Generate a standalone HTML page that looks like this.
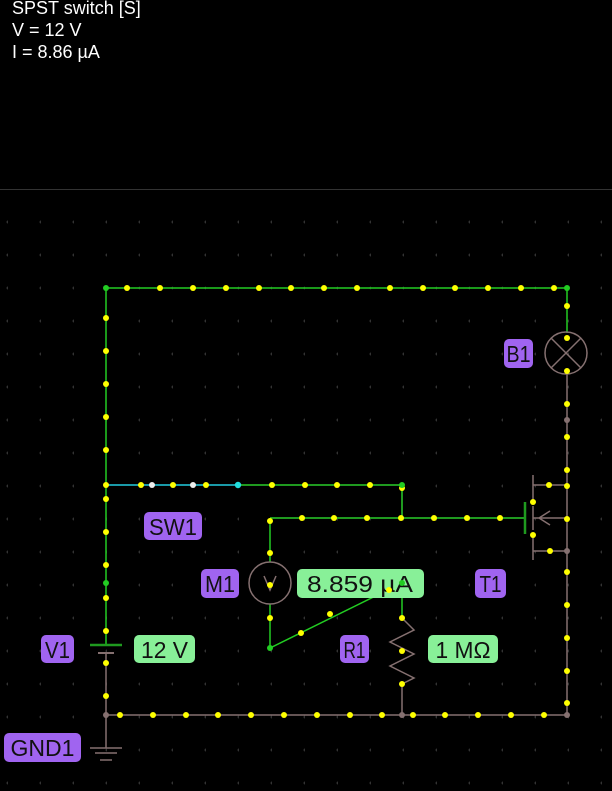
<!DOCTYPE html>
<html><head><style>
html,body{margin:0;padding:0;background:#000;width:612px;height:791px;overflow:hidden}
.hdr{position:absolute;left:12px;top:-3px;color:#fff;font:18px/22px "Liberation Sans",sans-serif}
svg{position:absolute;left:0;top:0}
</style></head><body>
<div class="hdr">SPST switch [S]<br>V = 12 V<br>I = 8.86 µA</div>
<svg width="612" height="791" xmlns="http://www.w3.org/2000/svg">
<defs>
<pattern id="g" x="-25" y="222" width="33" height="33" patternUnits="userSpaceOnUse"><circle cx="33" cy="0" r="1.5" fill="#333"/><circle cx="33" cy="33" r="1.5" fill="#333"/></pattern>
</defs>
<line x1="0" y1="189.5" x2="612" y2="189.5" stroke="#333" stroke-width="1"/>
<rect x="0" y="200" width="612" height="591" fill="url(#g)"/>
<g fill="none" stroke-width="1.5">
<path d="M106 288H567V333" stroke="#22cc22"/>
<path d="M106 288V485" stroke="#22cc22"/>
<path d="M106 485V645" stroke="#22cc22"/>
<path d="M106 653V748" stroke="#857070"/>
<path d="M106 715H567V373" stroke="#857070"/>
<path d="M106 485H238" stroke="#1a9aa8" stroke-width="2"/>
<path d="M238 485H402V518" stroke="#1f9a1f" stroke-width="2"/>
<path d="M270 518H525" stroke="#1f9a1f" stroke-width="2"/>
<path d="M525 502V534" stroke="#1f9a1f" stroke-width="2.5"/>
<path d="M270 518V562M270 604V648L402 583V618" stroke="#22cc22"/>
<path d="M533 475V500M533 506V530M533 536V560M533 485H567M533 551H567M533 518H567M539 518L550 511M539 518L550 525" stroke="#857070"/>
<path d="M402 618L414 630L390 642L414 654L390 666L414 678L402 684V715" stroke="#857070"/>
<circle cx="566" cy="353" r="21" stroke="#857070"/>
<path d="M551 338L581 368M581 338L551 368" stroke="#857070"/>
<circle cx="270" cy="583" r="21" stroke="#857070"/>
<path d="M264 576L270 590L276 576" stroke="#857070"/>
<path d="M90 645H122" stroke="#1f9a1f" stroke-width="2.5"/>
<path d="M98 653H114" stroke="#857070" stroke-width="2"/>
<path d="M90 748H122M95 753H117M100 760H112" stroke="#857070"/>
</g>
<g fill="#ffff00">
<circle cx="127" cy="288" r="3"/><circle cx="160" cy="288" r="3"/><circle cx="193" cy="288" r="3"/><circle cx="226" cy="288" r="3"/><circle cx="259" cy="288" r="3"/><circle cx="291" cy="288" r="3"/><circle cx="324" cy="288" r="3"/><circle cx="357" cy="288" r="3"/><circle cx="390" cy="288" r="3"/><circle cx="423" cy="288" r="3"/><circle cx="455" cy="288" r="3"/><circle cx="488" cy="288" r="3"/><circle cx="521" cy="288" r="3"/><circle cx="554" cy="288" r="3"/>
<circle cx="106" cy="318" r="3"/><circle cx="106" cy="351" r="3"/><circle cx="106" cy="384" r="3"/><circle cx="106" cy="417" r="3"/><circle cx="106" cy="450" r="3"/><circle cx="106" cy="485" r="3"/><circle cx="106" cy="499" r="3"/><circle cx="106" cy="532" r="3"/><circle cx="106" cy="565" r="3"/><circle cx="106" cy="598" r="3"/><circle cx="106" cy="631" r="3"/><circle cx="106" cy="663" r="3"/><circle cx="106" cy="696" r="3"/>
<circle cx="120" cy="715" r="3"/><circle cx="153" cy="715" r="3"/><circle cx="186" cy="715" r="3"/><circle cx="218" cy="715" r="3"/><circle cx="251" cy="715" r="3"/><circle cx="284" cy="715" r="3"/><circle cx="317" cy="715" r="3"/><circle cx="350" cy="715" r="3"/><circle cx="382" cy="715" r="3"/><circle cx="413" cy="715" r="3"/><circle cx="445" cy="715" r="3"/><circle cx="478" cy="715" r="3"/><circle cx="511" cy="715" r="3"/><circle cx="544" cy="715" r="3"/>
<circle cx="567" cy="306" r="3"/><circle cx="567" cy="338" r="3"/><circle cx="567" cy="371" r="3"/><circle cx="567" cy="404" r="3"/><circle cx="567" cy="437" r="3"/><circle cx="567" cy="470" r="3"/><circle cx="567" cy="486" r="3"/><circle cx="567" cy="519" r="3"/><circle cx="567" cy="572" r="3"/><circle cx="567" cy="605" r="3"/><circle cx="567" cy="638" r="3"/><circle cx="567" cy="671" r="3"/><circle cx="567" cy="703" r="3"/>
<circle cx="141" cy="485" r="3"/><circle cx="173" cy="485" r="3"/><circle cx="206" cy="485" r="3"/><circle cx="272" cy="485" r="3"/><circle cx="305" cy="485" r="3"/><circle cx="337" cy="485" r="3"/><circle cx="370" cy="485" r="3"/><circle cx="402" cy="488" r="3"/>
<circle cx="302" cy="518" r="3"/><circle cx="334" cy="518" r="3"/><circle cx="367" cy="518" r="3"/><circle cx="401" cy="518" r="3"/><circle cx="434" cy="518" r="3"/><circle cx="467" cy="518" r="3"/><circle cx="500" cy="518" r="3"/><circle cx="270" cy="521" r="3"/>
<circle cx="533" cy="502" r="3"/><circle cx="533" cy="535" r="3"/><circle cx="549" cy="485" r="3"/><circle cx="550" cy="551" r="3"/>
<circle cx="270" cy="553" r="3"/><circle cx="270" cy="585" r="3"/><circle cx="270" cy="618" r="3"/>
<circle cx="301" cy="633" r="3"/><circle cx="330" cy="614" r="3"/><circle cx="360" cy="594" r="3"/>
<circle cx="402" cy="618" r="3"/><circle cx="402" cy="651" r="3"/><circle cx="402" cy="684" r="3"/>
</g>
<g fill="#22cc22"><circle cx="106" cy="288" r="3"/><circle cx="567" cy="288" r="3"/><circle cx="106" cy="583" r="3"/><circle cx="270" cy="648" r="3"/><circle cx="402" cy="485" r="3"/></g>
<g fill="#eeeeee"><circle cx="152" cy="485" r="3"/><circle cx="193" cy="485" r="3"/></g>
<circle cx="238" cy="485" r="3.2" fill="#22dddd"/>
<g fill="#857070"><circle cx="106" cy="715" r="3"/><circle cx="567" cy="715" r="3"/><circle cx="402" cy="715" r="3"/><circle cx="567" cy="420" r="3"/><circle cx="567" cy="551" r="3"/></g>
<g font-family="Liberation Sans,sans-serif" font-size="23" fill="#111" text-anchor="middle" lengthAdjust="spacingAndGlyphs">
<rect x="504" y="339" width="29" height="29" rx="5" fill="#a064f0"/><text x="518.5" y="362" textLength="24" lengthAdjust="spacingAndGlyphs">B1</text>
<rect x="144" y="512" width="58" height="28" rx="5" fill="#a064f0"/><text x="173" y="535" textLength="48" lengthAdjust="spacingAndGlyphs">SW1</text>
<rect x="201" y="569" width="38" height="29" rx="5" fill="#a064f0"/><text x="220" y="592" textLength="30" lengthAdjust="spacingAndGlyphs">M1</text>
<rect x="297" y="569" width="127" height="29" rx="5" fill="#88f098"/><text x="360" y="592" textLength="106" lengthAdjust="spacingAndGlyphs">8.859 µA</text>
<rect x="475" y="569" width="31" height="29" rx="5" fill="#a064f0"/><text x="490.5" y="592" textLength="22" lengthAdjust="spacingAndGlyphs">T1</text>
<rect x="41" y="635" width="33" height="28" rx="5" fill="#a064f0"/><text x="57.5" y="658" textLength="25" lengthAdjust="spacingAndGlyphs">V1</text>
<rect x="134" y="635" width="61" height="28" rx="5" fill="#88f098"/><text x="164.5" y="658" textLength="47" lengthAdjust="spacingAndGlyphs">12 V</text>
<rect x="340" y="635" width="29" height="28" rx="5" fill="#a064f0"/><text x="354.5" y="658" textLength="22" lengthAdjust="spacingAndGlyphs">R1</text>
<rect x="428" y="635" width="70" height="28" rx="5" fill="#88f098"/><text x="463" y="658" textLength="55" lengthAdjust="spacingAndGlyphs">1 MΩ</text>
<rect x="4" y="733" width="77" height="29" rx="5" fill="#a064f0"/><text x="42.5" y="756" textLength="64" lengthAdjust="spacingAndGlyphs">GND1</text>
</g>
<circle cx="389" cy="590" r="3" fill="#ffff00"/><circle cx="402" cy="583" r="3" fill="#22cc22"/>
</svg>
</body></html>
